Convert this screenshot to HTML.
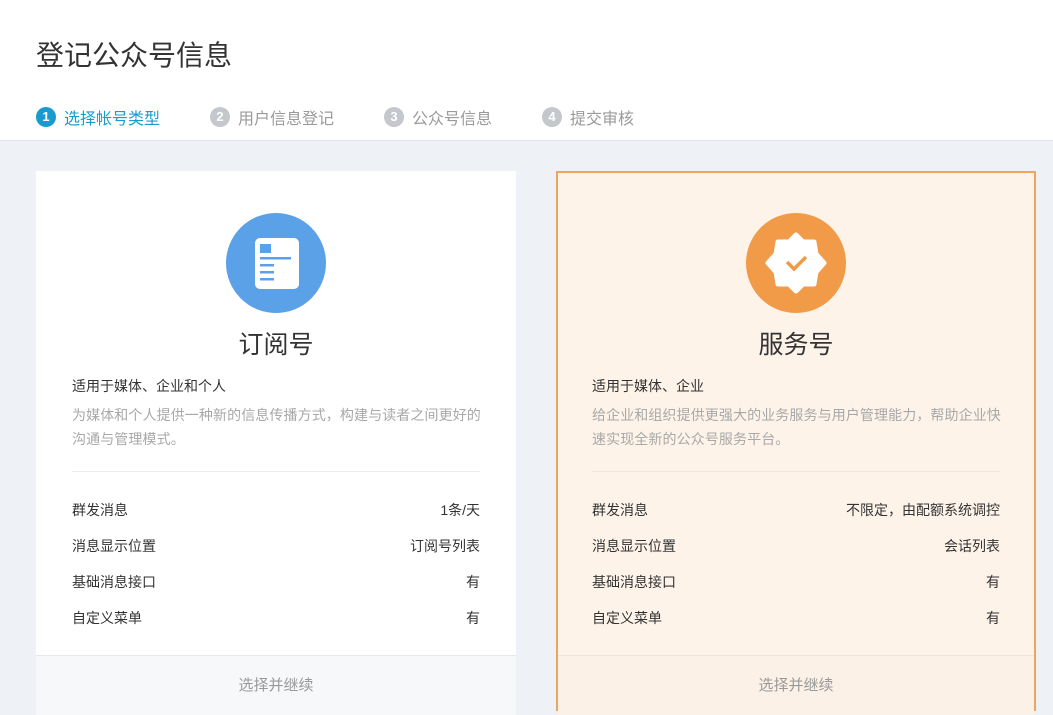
<!DOCTYPE html>
<html><head><meta charset="utf-8"><style>
*{margin:0;padding:0;box-sizing:border-box}
body{width:1053px;height:706px;overflow:hidden;background:#eef1f6;font-family:"Liberation Sans","Noto Sans CJK SC",sans-serif;position:relative}
.hd{position:absolute;left:0;top:0;width:1053px;height:141px;background:#fff;border-bottom:1px solid #dfe3ea}
.hd h1{position:absolute;left:36px;top:34px;font-size:28px;font-weight:normal;color:#333}
.st{position:absolute;top:105px;font-size:16px;color:#9a9a9a;display:flex;align-items:center}
.st i{display:inline-block;width:20px;height:20px;border-radius:50%;background:#c4c7cc;color:#fff;font-style:normal;font-size:13px;text-align:center;line-height:20px;margin-right:8px;font-weight:bold}
.st.on{color:#1a9bd0}.st.on i{background:#1a9bd0}
.card{position:absolute;top:171px;width:480px;height:540px;background:#fff}
.card.r{background:#fdf3e9;border:2px solid #eea55f}
.ic{position:absolute;top:42px;left:190px;width:100px;height:100px;border-radius:50%}
.t{position:absolute;top:154px;left:0;width:100%;text-align:center;font-size:25px;color:#333}
.s{position:absolute;left:36px;top:205px;font-size:14px;color:#333}
.d{position:absolute;left:36px;top:232px;width:440px;white-space:nowrap;font-size:14px;line-height:24px;color:#a8a8a8;letter-spacing:0.1px}
.hr{position:absolute;left:36px;top:300px;width:408px;height:1px;background:#ececec}
.row{position:absolute;left:36px;width:408px;font-size:14px;color:#333;display:flex;justify-content:space-between}
.ft{position:absolute;left:0;top:484px;width:100%;height:60px;border-top:1px solid #e8e8e8;background:#f7f8fa;text-align:center;font-size:15px;color:#999;padding-top:18px}
.r .ft{background:#fbf1e6;border-top-color:#efe3d6}
.r .s,.r .d,.r .hr,.r .row{left:34px}
</style></head><body>
<div class="hd"><h1>登记公众号信息</h1>
<div class="st on" style="left:36px"><i>1</i>选择帐号类型</div>
<div class="st" style="left:210px"><i>2</i>用户信息登记</div>
<div class="st" style="left:384px"><i>3</i>公众号信息</div>
<div class="st" style="left:542px"><i>4</i>提交审核</div>
</div>
<div class="card" style="left:36px">
<div class="ic" style="background:#5ba1e7"><svg width="100" height="100" viewBox="0 0 100 100"><rect x="29" y="25" width="44" height="51" rx="5" fill="#fff"/><rect x="34" y="31" width="11" height="9" fill="#5ba1e7"/><rect x="34" y="44" width="31" height="2.5" fill="#5ba1e7"/><rect x="34" y="51" width="14" height="2.5" fill="#5ba1e7"/><rect x="34" y="58" width="14" height="2.5" fill="#5ba1e7"/><rect x="34" y="65" width="14" height="2.5" fill="#5ba1e7"/></svg></div>
<div class="t">订阅号</div>
<div class="s">适用于媒体、企业和个人</div>
<div class="d">为媒体和个人提供一种新的信息传播方式，构建与读者之间更好的<br>沟通与管理模式。</div>
<div class="hr"></div>
<div class="row" style="top:329px"><span>群发消息</span><span>1条/天</span></div>
<div class="row" style="top:365px"><span>消息显示位置</span><span>订阅号列表</span></div>
<div class="row" style="top:401px"><span>基础消息接口</span><span>有</span></div>
<div class="row" style="top:437px"><span>自定义菜单</span><span>有</span></div>
<div class="ft">选择并继续</div>
</div>
<div class="card r" style="left:556px">
<div class="ic" style="background:#f19b49;top:40px;left:188px"><svg width="100" height="100" viewBox="0 0 100 100"><path d="M50 22 L57 29 L68 29 L70 41 L78 50 L70 59 L68 71 L57 71 L50 78 L43 71 L32 71 L30 59 L22 50 L30 41 L32 29 L43 29 Z" fill="#fff" stroke="#fff" stroke-width="5" stroke-linejoin="round"/><path d="M41 49 L48 56 L60 44" fill="none" stroke="#f19b49" stroke-width="3.5"/></svg></div>
<div class="t" style="top:152px">服务号</div>
<div class="s" style="top:203px">适用于媒体、企业</div>
<div class="d" style="top:230px">给企业和组织提供更强大的业务服务与用户管理能力，帮助企业快<br>速实现全新的公众号服务平台。</div>
<div class="hr" style="top:298px;background:#efe4d8"></div>
<div class="row" style="top:327px"><span>群发消息</span><span>不限定，由配额系统调控</span></div>
<div class="row" style="top:363px"><span>消息显示位置</span><span>会话列表</span></div>
<div class="row" style="top:399px"><span>基础消息接口</span><span>有</span></div>
<div class="row" style="top:435px"><span>自定义菜单</span><span>有</span></div>
<div class="ft" style="top:482px">选择并继续</div>
</div>
</body></html>
